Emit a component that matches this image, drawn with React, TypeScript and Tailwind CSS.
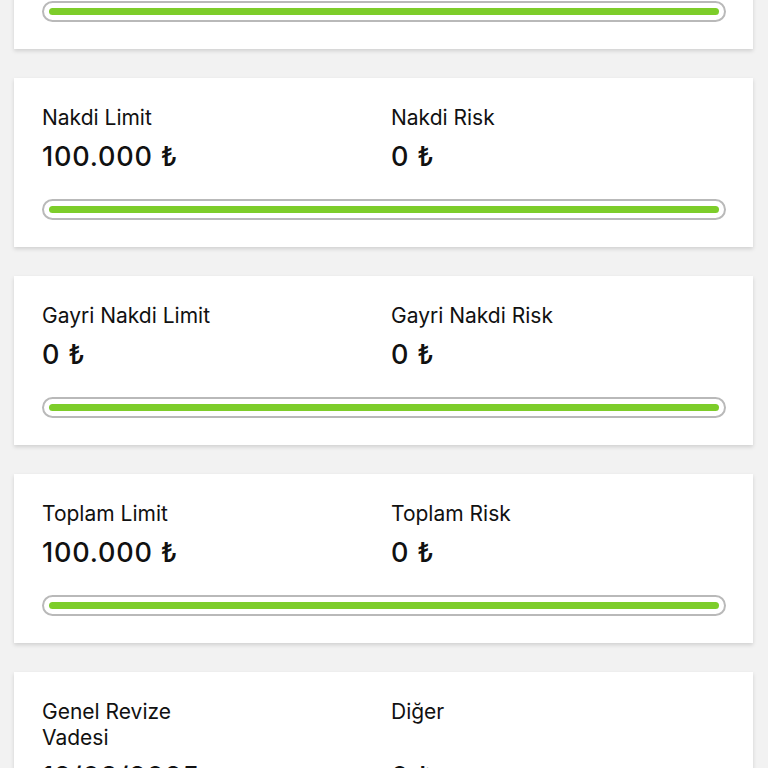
import React from "react";

/* -------------------- Types -------------------- */

type Field = {
  label: string;
  value: string;
  narrow?: boolean;
};

type Card = {
  id: string;
  left: Field;
  right: Field;
  bar?: boolean;
};

/* -------------------- Data -------------------- */

const cards: Card[] = [
  {
    id: "kredi",
    left: { label: "Kredi Kartı Limit", value: "50.000 ₺" },
    right: { label: "Kredi Kartı Risk", value: "0 ₺" },
    bar: true,
  },
  {
    id: "nakdi",
    left: { label: "Nakdi Limit", value: "100.000 ₺" },
    right: { label: "Nakdi Risk", value: "0 ₺" },
    bar: true,
  },
  {
    id: "gayri",
    left: { label: "Gayri Nakdi Limit", value: "0 ₺" },
    right: { label: "Gayri Nakdi Risk", value: "0 ₺" },
    bar: true,
  },
  {
    id: "toplam",
    left: { label: "Toplam Limit", value: "100.000 ₺" },
    right: { label: "Toplam Risk", value: "0 ₺" },
    bar: true,
  },
  {
    id: "revize",
    left: { label: "Genel Revize Vadesi", value: "12/08/2025", narrow: true },
    right: { label: "Diğer", value: "0 ₺" },
  },
];

/* -------------------- Pieces -------------------- */

function Label({ field }: { field: Field }) {
  return (
    <div
      className={
        "text-[21px] leading-[26px] text-[#111] " +
        (field.narrow ? "max-w-[160px]" : "")
      }
    >
      {field.label}
    </div>
  );
}

function Value({ field }: { field: Field }) {
  return (
    <div className="text-[27px] leading-[32px] font-[450] tracking-[0.8px] text-[#111]">
      {field.value}
    </div>
  );
}

function UsageBar() {
  return (
    <div className="h-[21px] rounded-full border-2 border-[#b9b9b9] bg-white px-[5px] flex items-center">
      <div className="h-[7px] w-full rounded-full bg-[#7dcd2a]" />
    </div>
  );
}

function LimitCard({ card }: { card: Card }) {
  return (
    <div className="bg-white shadow-[0_2px_4px_rgba(0,0,0,0.14)] pt-[27px] pb-[27px] pl-[28px] pr-[27px]">
      <div className="grid grid-cols-2 gap-x-[14px] gap-y-[10px]">
        <Label field={card.left} />
        <Label field={card.right} />
        <Value field={card.left} />
        <Value field={card.right} />
      </div>
      {card.bar && (
        <div className="mt-[26px]">
          <UsageBar />
        </div>
      )}
    </div>
  );
}

/* -------------------- Page -------------------- */

export default function App() {
  return (
    <div
      className="h-[768px] overflow-hidden bg-[#f2f2f2]"
      style={{ fontFamily: "Inter, 'Noto Sans', sans-serif" }}
    >
      <div className="-mt-[120px] flex flex-col gap-[29px] pl-[14px] pr-[15px]">
        {cards.map((c) => (
          <LimitCard key={c.id} card={c} />
        ))}
      </div>
    </div>
  );
}
